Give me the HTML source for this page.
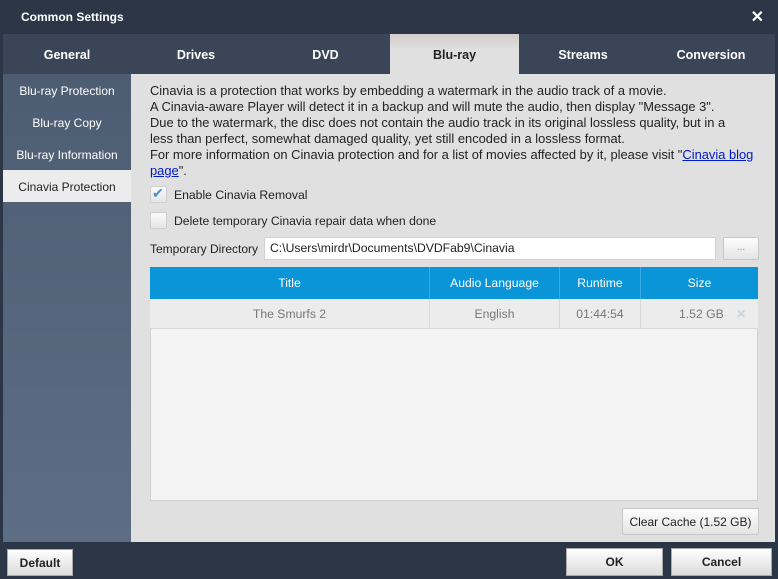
<!DOCTYPE html>
<html><head><style>
*{margin:0;padding:0;box-sizing:border-box}
body{width:778px;height:579px;background:#2b3646;font-family:"Liberation Sans",Arial,sans-serif;position:relative;overflow:hidden;font-size:12px}
.a{position:absolute}
.title{left:0;top:0;width:778px;height:34px;background:#2c3646;color:#fff;font-weight:bold;font-size:12px;line-height:34px;padding-left:21px}
.tabs{left:3px;top:34px;width:772px;height:40px;background:#3a4658}
.tab{top:34px;height:40px;line-height:43px;color:#fff;font-weight:bold;text-align:center;font-size:12.5px}
.side{left:3px;top:74px;width:128px;height:468px;background:linear-gradient(#4c5d72,#5d6e84)}
.si{left:3px;width:128px;height:32px;line-height:34px;text-align:center;color:#fff;font-size:12px}
.content{left:131px;top:74px;width:644px;height:468px;background:#e0e0e0}
.txt{left:150px;top:83px;width:606px;line-height:16px;color:#222;font-size:12.9px}
.cb{width:17px;height:17px;border:1px solid #cfcfcf;border-radius:2px;background:linear-gradient(#fafafa,#e6e6e6)}
.btn{background:linear-gradient(#fdfdfd,#e4e4e4);border:1px solid #c8c8c8;border-radius:2px;text-align:center;color:#222}
.bb{background:linear-gradient(#fefefe,#dcdcdc);border:1px solid #aaa;font-weight:bold;font-size:12px;text-align:center;color:#222;line-height:26px}
.th{top:267px;height:32px;line-height:32px;color:#fff;text-align:center;background:#0a95d9;border-right:1px solid #3aaae2;font-size:12.2px}
.td{top:299px;height:30px;line-height:30px;color:#777;text-align:center;border-right:1px solid #d8d8d8;background:#ececec;border-bottom:1px solid #d8d8d8;font-size:12.2px}
</style></head><body>
<div class="a title">Common Settings</div>
<div class="a" style="right:14px;top:7px;color:#fff;font-weight:bold;font-size:16px">✕</div>
<div class="a tabs"></div>
<div class="a tab" style="left:3px;width:128px">General</div>
<div class="a tab" style="left:131px;width:130px">Drives</div>
<div class="a tab" style="left:261px;width:129px">DVD</div>
<div class="a tab" style="left:390px;width:129px;background:linear-gradient(#d2cdca,#e0e0e0 40%);color:#222">Blu-ray</div>
<div class="a tab" style="left:519px;width:128px">Streams</div>
<div class="a tab" style="left:647px;width:128px">Conversion</div>
<div class="a side"></div>
<div class="a si" style="top:74px">Blu-ray Protection</div>
<div class="a si" style="top:106px">Blu-ray Copy</div>
<div class="a si" style="top:138px">Blu-ray Information</div>
<div class="a si" style="top:170px;background:#ececec;color:#222">Cinavia Protection</div>
<div class="a content"></div>
<div class="a txt">Cinavia is a protection that works by embedding a watermark in the audio track of a movie.<br>A Cinavia-aware Player will detect it in a backup and will mute the audio, then display "Message 3".<br>Due to the watermark, the disc does not contain the audio track in its original lossless quality, but in a<br>less than perfect, somewhat damaged quality, yet still encoded in a lossless format.<br>For more information on Cinavia protection and for a list of movies affected by it, please visit "<a style="color:#0019c9;text-decoration:underline">Cinavia blog<br>page</a>".</div>
<div class="a cb" style="left:150px;top:186px"></div>
<div class="a" style="left:152px;top:185px;color:#4a90c8;font-size:14px">✔</div>
<div class="a" style="left:174px;top:188px;color:#222;font-size:12.2px">Enable Cinavia Removal</div>
<div class="a cb" style="left:150px;top:212px"></div>
<div class="a" style="left:174px;top:214px;color:#222;font-size:12.2px">Delete temporary Cinavia repair data when done</div>
<div class="a" style="left:150px;top:242px;color:#222;font-size:12px">Temporary Directory</div>
<div class="a" style="left:264px;top:237px;width:452px;height:23px;background:#fff;border:1px solid #d0d0d0;line-height:21px;padding-left:5px;color:#222;font-size:12.2px">C:\Users\mirdr\Documents\DVDFab9\Cinavia</div>
<div class="a btn" style="left:723px;top:237px;width:36px;height:23px;line-height:20px;color:#888;font-size:10px">...</div>
<div class="a" style="left:150px;top:267px;width:608px;height:234px;background:#f3f3f3;border:1px solid #d0d0d0"></div>
<div class="a th" style="left:150px;width:280px">Title</div>
<div class="a th" style="left:430px;width:130px">Audio Language</div>
<div class="a th" style="left:560px;width:81px">Runtime</div>
<div class="a th" style="left:641px;width:117px;border-right:none">Size</div>
<div class="a td" style="left:150px;width:280px">The Smurfs 2</div>
<div class="a td" style="left:430px;width:130px">English</div>
<div class="a td" style="left:560px;width:81px">01:44:54</div>
<div class="a td" style="left:641px;width:117px;border-right:none;text-align:left;padding-left:38px">1.52 GB <span style="color:#c8d4de;font-weight:bold;margin-left:9px">✕</span></div>
<div class="a btn" style="left:622px;top:508px;width:137px;height:27px;line-height:26px;font-size:12px">Clear Cache (1.52 GB)</div>
<div class="a bb" style="left:7px;top:549px;width:66px;height:27px">Default</div>
<div class="a bb" style="left:566px;top:548px;width:97px;height:28px">OK</div>
<div class="a bb" style="left:671px;top:548px;width:101px;height:28px">Cancel</div>
</body></html>
